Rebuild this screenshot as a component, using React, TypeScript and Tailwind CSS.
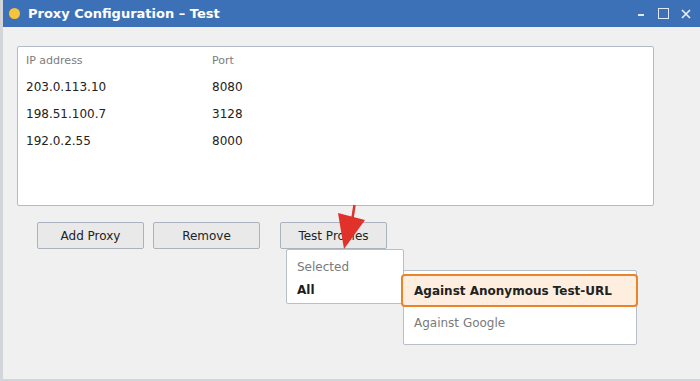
import React from 'react';

const rows = [
  { ip: '203.0.113.10', port: '8080' },
  { ip: '198.51.100.7', port: '3128' },
  { ip: '192.0.2.55', port: '8000' },
];

const font = { fontFamily: '"DejaVu Sans", Verdana, sans-serif' };

export default function App() {
  return (
    <div
      className="relative w-[700px] h-[381px] overflow-hidden bg-[#f1f0f0] flex flex-col border-l-[3px] border-b-2 border-[#d2d5da]"
      style={font}
    >
      {/* title bar */}
      <div className="h-[27px] -ml-[3px] bg-[#3d71b7] flex items-center pl-[9px] pr-[9px] text-white shrink-0">
        <span className="w-[11px] h-[11px] rounded-full bg-[#f6c33c]" />
        <span className="ml-[8px] text-[13px] font-bold">Proxy Configuration – Test</span>
        <div className="ml-auto flex items-center text-[#dfe8f5]">
          <span className="w-[6px] h-[1.5px] bg-[#dfe8f5] mt-[3px]" />
          <span className="ml-[14px] w-[11px] h-[11px] border-[1.5px] border-[#dfe8f5]" />
          <svg width="10" height="10" viewBox="0 0 10 10" className="ml-[12px]">
            <path d="M1 1 L9 9 M9 1 L1 9" stroke="#eef3fa" strokeWidth="1.6" />
          </svg>
        </div>
      </div>

      <div className="pl-[14px] pt-[19px]">
        {/* table panel */}
        <div className="w-[637px] h-[160px] bg-white border border-[#b4bbc6] rounded-[2px] pl-[8px] pt-[7px]">
          <div className="flex text-[11px] text-[#7c7c7c] h-[15px] items-center">
            <span className="w-[186px]">IP address</span>
            <span>Port</span>
          </div>
          <div className="mt-[9px] flex flex-col gap-[9px] text-[12px] text-[#222]">
            {rows.map((r) => (
              <div key={r.ip} className="flex h-[18px] items-center">
                <span className="w-[186px]">{r.ip}</span>
                <span>{r.port}</span>
              </div>
            ))}
          </div>
        </div>

        {/* buttons */}
        <div className="flex mt-[16px] pl-[20px] text-[12px] text-[#222]">
          <button className="w-[107px] h-[27px] bg-[#e9e9ea] border border-[#aab2bd] rounded-[2px]">Add Proxy</button>
          <button className="ml-[9px] w-[107px] h-[27px] bg-[#e9e9ea] border border-[#aab2bd] rounded-[2px]">Remove</button>
          <button className="ml-[20px] w-[107px] h-[27px] bg-[#e9e9ea] border border-[#aab2bd] rounded-[2px]">Test Proxies</button>
        </div>
      </div>

      {/* dropdown menu */}
      <div className="absolute left-[283px] top-[249px] w-[118px] h-[55px] bg-white border border-[#b9bfc8] rounded-[2px] text-[12px] pl-[10px] pt-[8px]">
        <div className="text-[#7a7a7a] h-[18px] leading-[18px]">Selected</div>
        <div className="font-bold text-[#1e1e1e] mt-[5px] h-[18px] leading-[18px]">All</div>
      </div>

      {/* submenu */}
      <div className="absolute left-[400px] top-[270px] w-[234px] h-[75px] bg-white border border-[#b9bfc8] rounded-[2px] text-[12px]">
        <div className="text-[#7a7a7a] absolute left-[10px] top-[43px] h-[18px] leading-[18px]">Against Google</div>
      </div>
      <div className="absolute left-[398px] top-[274px] w-[237px] h-[33px] bg-[#fdeedf] border-[2.5px] border-[#eb8328] rounded-[4px] flex items-center pl-[11px] text-[12px] font-bold text-[#222]">
        Against Anonymous Test-URL
      </div>

      {/* red annotation arrow */}
      <svg className="absolute left-[328px] top-[203px]" width="40" height="52" viewBox="0 0 40 52">
        <path d="M21.5 15 L23.5 2" stroke="#e0322b" strokeWidth="2.5" />
        <path d="M7 10 L34 17 L13 46 Z" fill="#e0322b" />
      </svg>
    </div>
  );
}
